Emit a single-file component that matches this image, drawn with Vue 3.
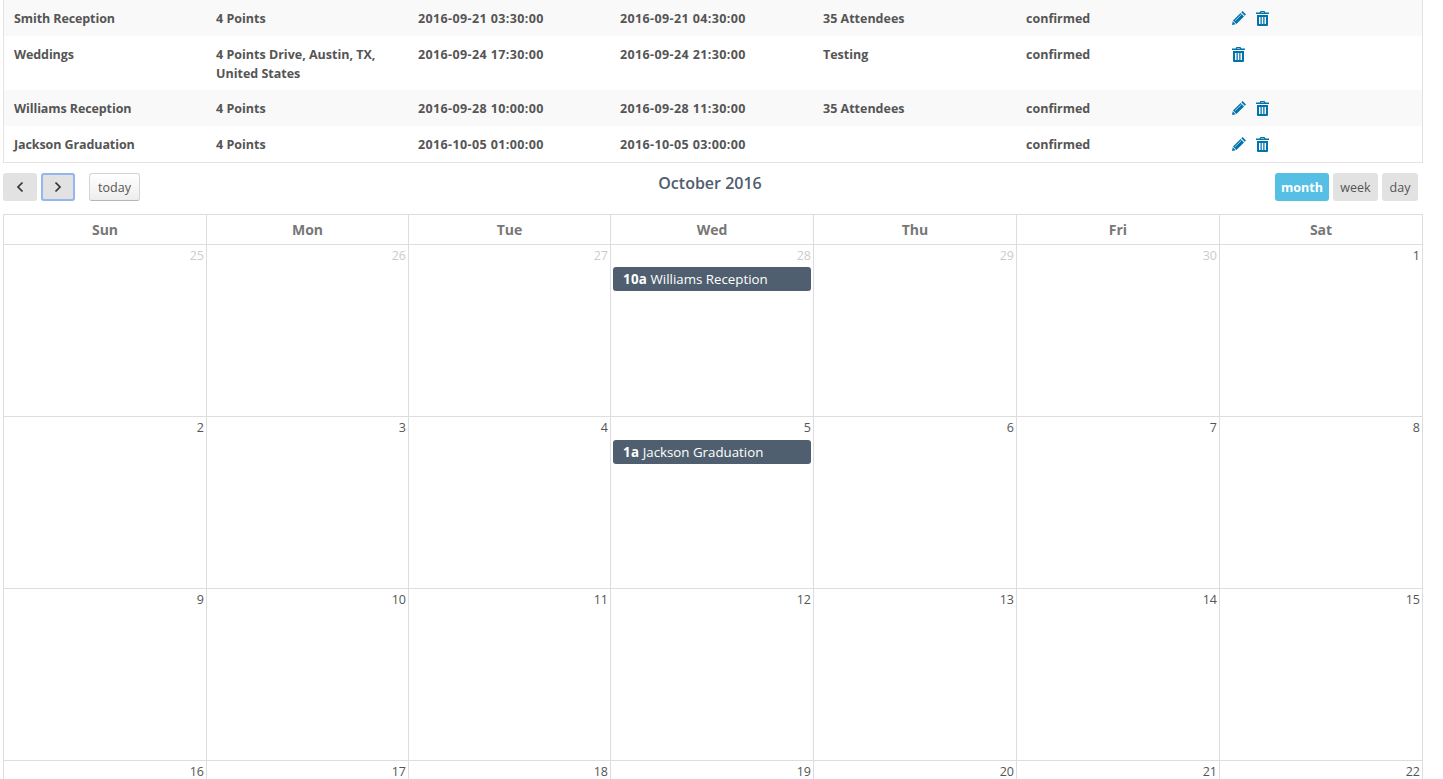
<script setup>
const rows = [
  { name: 'Smith Reception', place: '4 Points', start: '2016-09-21 03:30:00', end: '2016-09-21 04:30:00', note: '35 Attendees', edit: true },
  { name: 'Weddings', place: '4 Points Drive, Austin, TX, United States', start: '2016-09-24 17:30:00', end: '2016-09-24 21:30:00', note: 'Testing', edit: false },
  { name: 'Williams Reception', place: '4 Points', start: '2016-09-28 10:00:00', end: '2016-09-28 11:30:00', note: '35 Attendees', edit: true },
  { name: 'Jackson Graduation', place: '4 Points', start: '2016-10-05 01:00:00', end: '2016-10-05 03:00:00', note: '', edit: true }
]
const days = ['Sun', 'Mon', 'Tue', 'Wed', 'Thu', 'Fri', 'Sat']
const weeks = [
  [{ d: 25, o: 1 }, { d: 26, o: 1 }, { d: 27, o: 1 }, { d: 28, o: 1, t: '10a', e: 'Williams Reception' }, { d: 29, o: 1 }, { d: 30, o: 1 }, { d: 1 }],
  [{ d: 2 }, { d: 3 }, { d: 4 }, { d: 5, t: '1a', e: 'Jackson Graduation' }, { d: 6 }, { d: 7 }, { d: 8 }],
  [{ d: 9 }, { d: 10 }, { d: 11 }, { d: 12 }, { d: 13 }, { d: 14 }, { d: 15 }],
  [{ d: 16 }, { d: 17 }, { d: 18 }, { d: 19 }, { d: 20 }, { d: 21 }, { d: 22 }]
]
</script>

<template>
  <div class="page">
    <table class="events">
      <colgroup>
        <col class="c1" /><col class="c2" /><col class="c3" /><col class="c4" /><col class="c5" /><col class="c6" /><col />
      </colgroup>
      <tbody>
        <tr v-for="r in rows" :key="r.name">
          <td class="name">{{ r.name }}</td>
          <td>{{ r.place }}</td>
          <td class="date">{{ r.start }}</td>
          <td class="date">{{ r.end }}</td>
          <td>{{ r.note }}</td>
          <td>confirmed</td>
          <td class="actions">
            <svg v-if="r.edit" class="ic pencil" viewBox="0 0 14 14" width="14" height="14">
              <path d="M10.600 0 14 3.400 12.700 4.700 9.300 1.300zM8.600 2 12 5.400 4.400 13 1 9.600zM.7 10.300 3.700 13.300 0 14z" />
              <path class="streak" d="M2.900 9.900 9.500 3.300" />
            </svg>
            <svg class="ic trash" viewBox="0 0 13 15" width="13" height="15">
              <path fill-rule="evenodd" d="M4.500 0h4l1 1.500H13V3H0V1.500h3.500zM5.100 1 4.800 1.500h3.400L7.900 1zM1 4h11v10a1 1 0 0 1-1 1H2a1 1 0 0 1-1-1zM3 6v7h1.500V6zM5.750 6v7h1.500V6zM8.500 6v7H10V6z" />
            </svg>
          </td>
        </tr>
      </tbody>
    </table>

    <div class="toolbar">
      <div class="left">
        <button class="btn flat arrow"><svg viewBox="0 0 10 12" width="10" height="12"><path d="M7.500 1.500 3 6l4.500 4.500" /></svg></button>
        <button class="btn flat arrow focus"><svg viewBox="0 0 10 12" width="10" height="12"><path d="M2.500 1.500 7 6l-4.500 4.500" /></svg></button>
        <button class="btn today">today</button>
      </div>
      <h2 class="title">October 2016</h2>
      <div class="right">
        <button class="btn active">month</button>
        <button class="btn flat week">week</button>
        <button class="btn flat day">day</button>
      </div>
    </div>

    <div class="cal">
      <div class="head">
        <div v-for="d in days" :key="d" class="hcell">{{ d }}</div>
      </div>
      <div v-for="(w, i) in weeks" :key="i" class="week-row">
        <div v-for="c in w" :key="c.d" class="cell">
          <div class="num" :class="{ other: c.o }">{{ c.d }}</div>
          <div v-if="c.e" class="event"><b>{{ c.t }}</b> {{ c.e }}</div>
        </div>
      </div>
    </div>
  </div>
</template>

<style>
html, body { margin: 0; height: 779px; overflow: hidden; background: #fff; }
</style>

<style scoped>
.page {
  width: 1420px;
  margin-left: 3px;
  font-family: "Open Sans", "Liberation Sans", sans-serif;
  color: #555;
}
.events {
  width: 1420px;
  border-collapse: separate;
  border-spacing: 0;
  table-layout: fixed;
  border: 1px solid #e3e3e3;
  border-top: 0;
  font-size: 12.500px;
  font-weight: 700;
  line-height: 18.500px;
}
.c1, .c2, .c3 { width: 202px; }
.c4, .c5, .c6 { width: 203px; }
.events td { height: 36px; box-sizing: border-box; padding: 10px 10px 7px; vertical-align: top; }
.events tr:nth-child(odd) td { background: #f9f9f9; }
.name { letter-spacing: -.1px; }
.date { letter-spacing: .38px; }
.events .actions {
  display: flex;
  gap: 10px;
  padding: 9px 10px 9px 13px;
  align-items: center;
}
.events tr:nth-child(2) .actions { background: #fff; }
.ic { fill: #0073aa; flex: none; }
.streak { fill: none; stroke: #bcdcea; stroke-width: .9; }
.toolbar {
  display: grid;
  grid-template-columns: 1fr auto 1fr;
  height: 51px;
  align-items: start;
  padding-top: 10px;
  box-sizing: border-box;
}
.left { display: flex; gap: 4px; }
.right { display: flex; gap: 4px; justify-content: flex-end; padding-right: 5px; }
.title {
  margin: -1px 6px 0 0;
  font-size: 16px;
  font-weight: 600;
  line-height: 22px;
  color: #4f5d6e;
}
.btn {
  height: 28px;
  border: 0;
  border-radius: 3px;
  padding: 0;
  font-family: inherit;
  font-size: 12.500px;
  color: #555;
  box-sizing: border-box;
  display: flex;
  align-items: center;
  justify-content: center;
}
.flat { background: #e2e2e2; }
.arrow { width: 34px; }
.arrow svg { fill: none; stroke: #333; stroke-width: 1.700; }
.focus { box-shadow: inset 0 0 0 2px #93b6ee; }
.today {
  width: 51px;
  margin-left: 10px;
  background: linear-gradient(#fff, #ededed);
  border: 1px solid #d4d4d4;
  border-bottom-color: #b5b5b5;
}
.active { background: #56bfe4; color: #fff; font-weight: 700; width: 54px; }
.week { width: 45px; }
.day { width: 36px; }
.cal { border-top: 1px solid #ddd; border-left: 1px solid #ddd; }
.head, .week-row {
  display: grid;
  grid-template-columns: 203px 202px 202px 203px 203px 203px 203px;
}
.hcell {
  height: 29px;
  line-height: 29px;
  text-align: center;
  font-size: 14px;
  font-weight: 700;
  color: #777;
  border-right: 1px solid #ddd;
  border-bottom: 1px solid #ddd;
}
.cell {
  height: 171px;
  border-right: 1px solid #ddd;
  border-bottom: 1px solid #ddd;
  overflow: hidden;
}
.num {
  height: 22px;
  line-height: 22px;
  text-align: right;
  padding-right: 2px;
  font-size: 12.500px;
  color: #555;
}
.other { color: #ccc; }
.event {
  margin: 0 2px;
  height: 24px;
  line-height: 24px;
  padding-left: 10px;
  background: #505f6f;
  border-radius: 3px;
  color: #fff;
  font-size: 13.300px;
}
.event b { letter-spacing: .3px; }
.week-row:nth-child(3) .event { margin-top: 1px; }
</style>
